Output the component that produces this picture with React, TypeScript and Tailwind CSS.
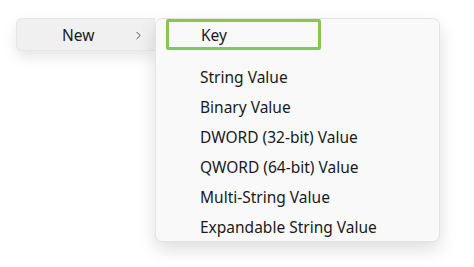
import { ChevronRight } from 'lucide-react'

const values = [
  'String Value',
  'Binary Value',
  'DWORD (32-bit) Value',
  'QWORD (64-bit) Value',
  'Multi-String Value',
  'Expandable String Value',
]

export default function App() {
  return (
    <div
      className="w-[474px] h-[267px] bg-white overflow-hidden flex items-start pt-[18px] pl-[16px] text-[#1a1a1a]"
      style={{ fontFamily: '"Noto Sans", "Open Sans", sans-serif' }}
    >
      {/* parent menu */}
      <div className="w-[139px] h-[33px] rounded-l-[6px] bg-[#f0f0f0] border border-r-0 border-[#e6e6e6] shadow-[0_6px_14px_rgba(0,0,0,0.10)] flex items-center pl-[45px] pr-[10px] pt-[2px] text-[15.5px]">
        <span className="flex-1">New</span>
        <ChevronRight size={13} strokeWidth={1.6} className="text-[#333]" />
      </div>

      {/* submenu */}
      <div className="w-[285px] h-[224px] rounded-[7px] bg-[#f9f9f9] border border-[#e3e3e3] shadow-[0_8px_18px_rgba(0,0,0,0.13)] flex flex-col text-[15.5px]">
        <div className="ml-[10px] w-[155px] h-[33px] border-[3px] border-[#85c851] rounded-[2px] flex items-center pl-[32px] pt-[2px]">
          Key
        </div>
        <div className="mx-[9px] mt-[3px] h-px bg-[#e3e3e3]" />
        <div className="flex flex-col pt-[9px]">
          {values.map((v) => (
            <div key={v} className="h-[30px] flex items-center pl-[44px]">
              {v}
            </div>
          ))}
        </div>
      </div>
    </div>
  )
}
